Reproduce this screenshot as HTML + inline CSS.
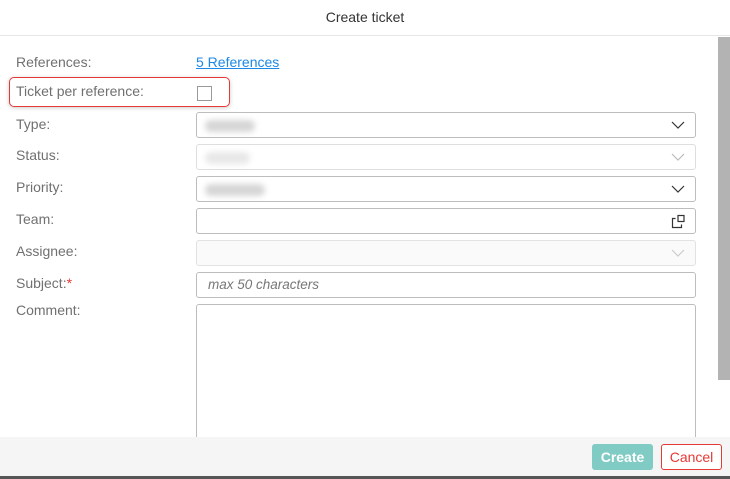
<!DOCTYPE html>
<html><head><style>
*{box-sizing:border-box;margin:0;padding:0}
body{width:730px;height:479px;background:#fff;font-family:"Liberation Sans",sans-serif;font-size:14px;color:#6b6b6b;position:relative;overflow:hidden}
.hdr{position:absolute;left:0;top:0;width:730px;height:36px;border-bottom:1px solid #e6e6e6;text-align:center;line-height:34px;color:#333;font-size:14px}
.lbl{position:absolute;left:16px;font-size:14px;color:#707070}
.box{position:absolute;left:196px;width:500px;height:26px;border:1px solid #bdbdbd;border-radius:3px;background:#fff}
.box.dis{border-color:#dedede}
.box.dis2{border-color:#e2e2e2;background:#fafafa}
.blur{position:absolute;left:8px;top:7px;height:12px;border-radius:6px;background:#d6d6d6;filter:blur(3px)}
.chev{position:absolute;right:10px;top:8px}
.sb{position:absolute;left:718px;top:37px;width:12px;height:343px;background:#b3b3b3}
.ft{position:absolute;left:0;top:437px;width:730px;height:39px;background:#f5f5f5}
.bot{position:absolute;left:0;top:476px;width:730px;height:3px;background:#555}
</style></head><body>
<div class="hdr">Create ticket</div>
<div class="lbl" style="top:54px">References:</div>
<div style="position:absolute;left:196px;top:54px;color:#1e88e5;text-decoration:underline">5 References</div>
<div style="position:absolute;left:9px;top:77px;width:221px;height:30px;border:1.5px solid #e53935;border-radius:5px;box-shadow:0 1px 4px rgba(0,0,0,.2)"></div>
<div class="lbl" style="top:83px">Ticket per reference:</div>
<div style="position:absolute;left:197px;top:86px;width:15px;height:15px;border:1.5px solid #999"></div>
<div class="lbl" style="top:116px">Type:</div>
<div class="box" style="top:112px"><div class="blur" style="width:50px"></div><svg class="chev" width="14" height="9"><path d="M1 1l6 6 6-6" fill="none" stroke="#333" stroke-width="1.2"/></svg></div>
<div class="lbl" style="top:147px">Status:</div>
<div class="box dis" style="top:144px"><div class="blur" style="width:45px;background:#e8e8e8"></div><svg class="chev" width="14" height="9"><path d="M1 1l6 6 6-6" fill="none" stroke="#bbb" stroke-width="1.2"/></svg></div>
<div class="lbl" style="top:179px">Priority:</div>
<div class="box" style="top:176px"><div class="blur" style="width:60px"></div><svg class="chev" width="14" height="9"><path d="M1 1l6 6 6-6" fill="none" stroke="#333" stroke-width="1.2"/></svg></div>
<div class="lbl" style="top:211px">Team:</div>
<div class="box" style="top:208px"><svg style="position:absolute;right:9px;top:5px" width="15" height="15"><path d="M4.5 4.5H1.5V13.5H10.5V10.5" fill="none" stroke="#333" stroke-width="1.2"/><rect x="7" y="1.5" width="6" height="6" fill="none" stroke="#333" stroke-width="1.2"/></svg></div>
<div class="lbl" style="top:243px">Assignee:</div>
<div class="box dis2" style="top:240px"><svg class="chev" width="14" height="9"><path d="M1 1l6 6 6-6" fill="none" stroke="#ccc" stroke-width="1.2"/></svg></div>
<div class="lbl" style="top:275px">Subject:<span style="color:#e53935">*</span></div>
<div class="box" style="top:272px"><span style="position:absolute;left:11px;top:4px;font-style:italic;color:#777;font-size:13.5px">max 50 characters</span></div>
<div class="lbl" style="top:302px">Comment:</div>
<div class="box" style="top:304px;height:140px"></div>
<div class="sb"></div>
<div class="ft">
<div style="position:absolute;left:592px;top:7px;width:61px;height:26px;background:#80cbc4;border-radius:3px;color:#fff;font-weight:bold;text-align:center;line-height:26px;font-size:14px">Create</div>
<div style="position:absolute;left:661px;top:7px;width:61px;height:26px;border:1px solid #e53935;background:#fff;border-radius:3px;color:#e53935;text-align:center;line-height:24px;font-size:14px">Cancel</div>
</div>
<div class="bot"></div>
</body></html>
